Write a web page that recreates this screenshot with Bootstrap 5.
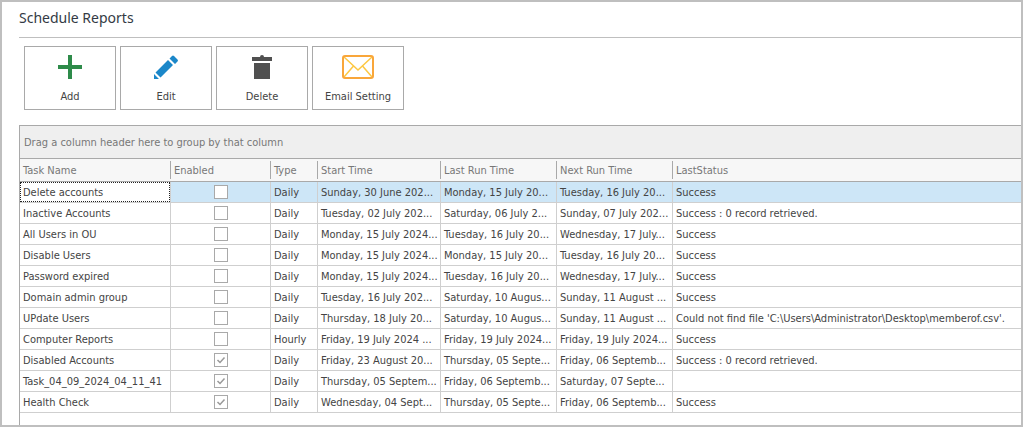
<!DOCTYPE html>
<html lang="en">
<head>
<meta charset="utf-8">
<meta name="viewport" content="width=device-width, initial-scale=1">
<title>Schedule Reports</title>
<link href="https://cdn.jsdelivr.net/npm/bootstrap@5.3.0/dist/css/bootstrap.min.css" rel="stylesheet">
<style>
  body { font-family: Tahoma, "DejaVu Sans Condensed", "DejaVu Sans", sans-serif; font-size: 11px; line-height: 20px; color: #444; background: #fff; }
  .app-frame { border: 2px solid #bfbfbf; padding-left: 17px; }
  .page-title { font-family: "Noto Sans", sans-serif; font-size: 14px; line-height: 20px; font-weight: 400; color: #333a44; padding: 6px 0 9px; border-bottom: 1px solid #bfbfbf; }
  .toolbar { gap: 4px; padding: 8px 5px 15px; }
  .tool-btn { width: 92px; height: 64px; padding: 6px 0 2px; border: 1px solid #a9a9a9; border-radius: 0; font-size: 11px; line-height: 20px; color: #444; background: #fff; }
  .tool-btn svg { width: 32px; height: 28px; }
  .grid-box { border: solid #a9a9a9; border-width: 1px 0 0 1px; }
  .group-panel { background: #efefef; color: #777; padding: 7px 4px 5px; border-bottom: 1px solid #a9a9a9; }
  .task-grid { table-layout: fixed; border-collapse: separate; border-spacing: 0; width: 100%; }
  .task-grid th, .task-grid td { padding: 0 3px; white-space: nowrap; overflow: hidden; }
  .task-grid th { height: 23px; padding-top: 2px; font-weight: 400; color: #777; border-bottom: 1px solid #a9a9a9; background: linear-gradient(#a9a9a9, #a9a9a9) right 2px / 1px 18px no-repeat #f7f7f7; }
  .task-grid th:last-child { background: #f7f7f7; }
  .task-grid td { height: 21px; padding-top: 2px; line-height: 18px; border: solid #cfcfcf; border-width: 0 1px 1px 0; }
  .task-grid td:last-child { border-right: 0; }
  .task-grid td:nth-child(2) { padding-top: 0; }
  .task-grid .picked td { background: #cde6f7; }
  .task-grid .picked td:first-child { padding: 0; background: #fff; }
  .focus-cell { display: block; padding: 2px 3px 0; outline: 1px dotted #222; outline-offset: -1px; }
  .col-task { width: 151px; } .col-on { width: 100px; } .col-type { width: 47px; } .col-start { width: 123px; } .col-run { width: 116px; }
  .grid-check { appearance: none; display: block; width: 14px; height: 14px; margin: 0 auto; border: 1px solid #a9a9a9; background: #fff; }
  .grid-check:checked { background: #fff url("data:image/svg+xml,%3Csvg xmlns='http://www.w3.org/2000/svg' viewBox='0 0 12 12'%3E%3Cpath d='M2.5 6l2.5 2.5 4.5-5' fill='none' stroke='%23999' stroke-width='1.5'/%3E%3C/svg%3E") center / 12px 12px no-repeat; }
</style>
</head>
<body>
<main class="app-frame min-vh-100 d-flex flex-column">
  <h1 class="page-title m-0">Schedule Reports</h1>
  <div class="toolbar d-flex">
    <button type="button" class="tool-btn d-flex flex-column align-items-center justify-content-between">
      <svg viewBox="0 0 32 28"><path d="M16 4v20M6 14h20" stroke="#2e8b4a" stroke-width="4" stroke-linecap="square"/></svg>
      <span>Add</span>
    </button>
    <button type="button" class="tool-btn d-flex flex-column align-items-center justify-content-between">
      <svg viewBox="0 0 32 28" fill="#1b87c9"><path d="M4 26v-5l5 5zM5.500 19.500L18 7l5 5L10.500 24.500zM19.500 5.500L22 3q1-1 2 0l3.500 3.500q1 1 0 2L25 11z"/></svg>
      <span>Edit</span>
    </button>
    <button type="button" class="tool-btn d-flex flex-column align-items-center justify-content-between">
      <svg viewBox="0 0 32 28" fill="#505050"><path d="M6 4h8q0-2 2-2t2 2h8v4H6zM8 10h16v16H8z"/></svg>
      <span>Delete</span>
    </button>
    <button type="button" class="tool-btn d-flex flex-column align-items-center justify-content-between">
      <svg viewBox="0 0 32 28" fill="none"><path d="M2 4l14 13L30 4M2 24l9.500-11M30 24l-9.500-11" stroke="#fdc843" stroke-width="1.500"/><rect x="1" y="3" width="30" height="22" rx="2" stroke="#f9a63a" stroke-width="2"/></svg>
      <span>Email Setting</span>
    </button>
  </div>
  <section class="grid-box flex-grow-1">
    <div class="group-panel">Drag a column header here to group by that column</div>
    <table class="task-grid">
      <colgroup><col class="col-task"><col class="col-on"><col class="col-type"><col class="col-start"><col class="col-run"><col class="col-run"><col></colgroup>
      <thead>
        <tr><th>Task Name</th><th>Enabled</th><th>Type</th><th>Start Time</th><th>Last Run Time</th><th>Next Run Time</th><th>LastStatus</th></tr>
      </thead>
      <tbody>
        <tr class="picked"><td><span class="focus-cell">Delete accounts</span></td><td><input class="grid-check" type="checkbox" aria-label="Delete accounts enabled"></td><td>Daily</td><td>Sunday, 30 June 202...</td><td>Monday, 15 July 20...</td><td>Tuesday, 16 July 20...</td><td>Success</td></tr>
        <tr><td>Inactive Accounts</td><td><input class="grid-check" type="checkbox" aria-label="Inactive Accounts enabled"></td><td>Daily</td><td>Tuesday, 02 July 202...</td><td>Saturday, 06 July 2...</td><td>Sunday, 07 July 202...</td><td>Success : 0 record retrieved.</td></tr>
        <tr><td>All Users in OU</td><td><input class="grid-check" type="checkbox" aria-label="All Users in OU enabled"></td><td>Daily</td><td>Monday, 15 July 2024...</td><td>Tuesday, 16 July 20...</td><td>Wednesday, 17 July...</td><td>Success</td></tr>
        <tr><td>Disable Users</td><td><input class="grid-check" type="checkbox" aria-label="Disable Users enabled"></td><td>Daily</td><td>Monday, 15 July 2024...</td><td>Monday, 15 July 20...</td><td>Tuesday, 16 July 20...</td><td>Success</td></tr>
        <tr><td>Password expired</td><td><input class="grid-check" type="checkbox" aria-label="Password expired enabled"></td><td>Daily</td><td>Monday, 15 July 2024...</td><td>Tuesday, 16 July 20...</td><td>Wednesday, 17 July...</td><td>Success</td></tr>
        <tr><td>Domain admin group</td><td><input class="grid-check" type="checkbox" aria-label="Domain admin group enabled"></td><td>Daily</td><td>Tuesday, 16 July 202...</td><td>Saturday, 10 Augus...</td><td>Sunday, 11 August ...</td><td>Success</td></tr>
        <tr><td>UPdate Users</td><td><input class="grid-check" type="checkbox" aria-label="UPdate Users enabled"></td><td>Daily</td><td>Thursday, 18 July 20...</td><td>Saturday, 10 Augus...</td><td>Sunday, 11 August ...</td><td>Could not find file 'C:\Users\Administrator\Desktop\memberof.csv'.</td></tr>
        <tr><td>Computer Reports</td><td><input class="grid-check" type="checkbox" aria-label="Computer Reports enabled"></td><td>Hourly</td><td>Friday, 19 July 2024 ...</td><td>Friday, 19 July 2024...</td><td>Friday, 19 July 2024...</td><td>Success</td></tr>
        <tr><td>Disabled Accounts</td><td><input class="grid-check" type="checkbox" checked aria-label="Disabled Accounts enabled"></td><td>Daily</td><td>Friday, 23 August 20...</td><td>Thursday, 05 Septe...</td><td>Friday, 06 Septemb...</td><td>Success : 0 record retrieved.</td></tr>
        <tr><td>Task_04_09_2024_04_11_41</td><td><input class="grid-check" type="checkbox" checked aria-label="Task_04_09_2024_04_11_41 enabled"></td><td>Daily</td><td>Thursday, 05 Septem...</td><td>Friday, 06 Septemb...</td><td>Saturday, 07 Septe...</td><td></td></tr>
        <tr><td>Health Check</td><td><input class="grid-check" type="checkbox" checked aria-label="Health Check enabled"></td><td>Daily</td><td>Wednesday, 04 Sept...</td><td>Thursday, 05 Septe...</td><td>Friday, 06 Septemb...</td><td>Success</td></tr>
      </tbody>
    </table>
  </section>
</main>
<script src="https://cdn.jsdelivr.net/npm/bootstrap@5.3.0/dist/js/bootstrap.bundle.min.js"></script>
</body>
</html>
